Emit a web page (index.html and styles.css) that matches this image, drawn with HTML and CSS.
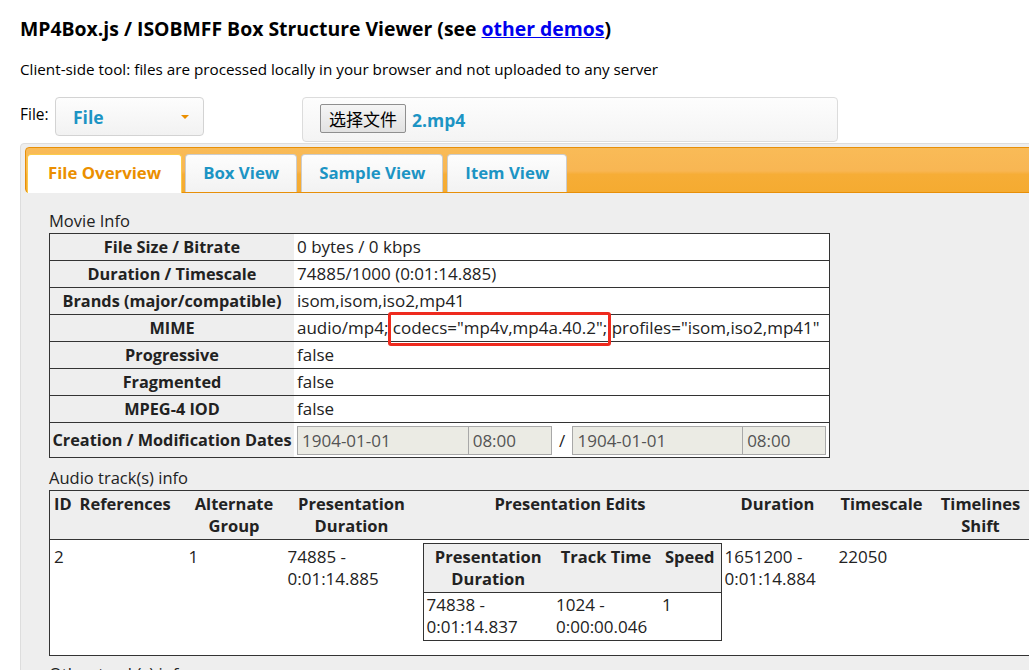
FILE: index.html
```html
<!DOCTYPE html>
<html lang="en">
<head>
<meta charset="utf-8">
<title>MP4Box.js / ISOBMFF Box Structure Viewer</title>
<link rel="stylesheet" href="styles.css">
</head>
<body>
<div class="page">
  <h1 class="title">MP4Box.js / ISOBMFF Box Structure Viewer (see <a href="#">other demos</a>)</h1>
  <p class="subtitle">Client-side tool: files are processed locally in your browser and not uploaded to any server</p>
  <div class="file-row">
    <span class="file-label">File:</span>
    <div class="select"><span class="select-text">File</span><span class="caret"></span></div>
    <div class="upload"><span class="choose">选择文件</span><span class="fname">2.mp4</span></div>
  </div>
  <div class="tabs">
    <ul class="tab-nav">
      <li class="tab active">File Overview</li>
      <li class="tab">Box View</li>
      <li class="tab">Sample View</li>
      <li class="tab">Item View</li>
    </ul>
    <div class="panel">
      <div class="caption">Movie Info</div>
      <table class="info">
        <tr><th>File Size / Bitrate</th><td>0 bytes / 0 kbps</td></tr>
        <tr><th>Duration / Timescale</th><td>74885/1000 (0:01:14.885)</td></tr>
        <tr><th>Brands (major/compatible)</th><td>isom,isom,iso2,mp41</td></tr>
        <tr><th>MIME</th><td>audio/mp4; <span class="hl">codecs="mp4v,mp4a.40.2";</span> profiles="isom,iso2,mp41"</td></tr>
        <tr><th>Progressive</th><td>false</td></tr>
        <tr><th>Fragmented</th><td>false</td></tr>
        <tr><th>MPEG-4 IOD</th><td>false</td></tr>
        <tr class="dates-row"><th>Creation / Modification Dates</th>
          <td><div class="dates"><span class="dt date">1904-01-01</span><span class="dt time">08:00</span><span class="slash">/</span><span class="dt date date2">1904-01-01</span><span class="dt time">08:00</span></div></td></tr>
      </table>
      <div class="caption cap-gap">Audio track(s) info</div>
      <table class="tracks">
        <colgroup>
          <col class="c-id"><col class="c-ref"><col class="c-alt"><col class="c-pd"><col class="c-edit"><col class="c-dur"><col class="c-ts"><col class="c-shift"><col class="c-more">
        </colgroup>
        <thead>
          <tr><th class="left">ID</th><th class="left">References</th><th>Alternate Group</th><th>Presentation Duration</th><th>Presentation Edits</th><th>Duration</th><th>Timescale</th><th>Timelines Shift</th><th></th></tr>
        </thead>
        <tbody>
          <tr>
            <td>2</td>
            <td></td>
            <td>1</td>
            <td>74885 -<br>0:01:14.885</td>
            <td class="edit-cell">
              <table class="edits">
                <colgroup><col class="e1"><col class="e2"><col class="e3"></colgroup>
                <tr><th>Presentation Duration</th><th>Track Time</th><th>Speed</th></tr>
                <tr><td>74838 -<br>0:01:14.837</td><td>1024 -<br>0:00:00.046</td><td>1</td></tr>
              </table>
            </td>
            <td>1651200 -<br>0:01:14.884</td>
            <td>22050</td>
            <td></td>
            <td></td>
          </tr>
        </tbody>
      </table>
      <div class="caption cap-gap2">Other track(s) info</div>
    </div>
  </div>
</div>
</body>
</html>
```

FILE: styles.css
```css
html, body {
  margin: 0;
  padding: 0;
  overflow: hidden;
  background: #fff;
}
body {
  font-family: "Open Sans", "Noto Sans CJK SC", sans-serif;
  color: #222;
}
.page {
  padding: 17px 0 0 20px;
}
.title {
  margin: 0;
  font-size: 19.4px;
  line-height: 24px;
  font-weight: 700;
  color: #000;
  white-space: nowrap;
}
.title a {
  color: #0000ee;
  text-decoration: underline;
}
.subtitle {
  margin: 16px 0 0;
  font-size: 15.25px;
  line-height: 24px;
  color: #000;
  white-space: nowrap;
}
.file-row {
  display: flex;
  align-items: flex-start;
  margin-top: 16px;
}
.file-label {
  font-size: 15.5px;
  line-height: 24px;
  margin-top: 5px;
  width: 35px;
  color: #000;
}
.select {
  width: 149px;
  height: 39px;
  box-sizing: border-box;
  border: 1px solid #d3d3d3;
  border-radius: 4px;
  background: linear-gradient(#fdfdfd, #f2f2f2);
  display: flex;
  align-items: center;
  justify-content: space-between;
  padding: 0 14px 0 17px;
}
.select-text {
  color: #1c94c4;
  font-weight: 700;
  font-size: 17.5px;
}
.caret {
  width: 0;
  height: 0;
  border-left: 4px solid transparent;
  border-right: 4px solid transparent;
  border-top: 4px solid #eb8f00;
}
.upload {
  margin-left: 98px;
  width: 536px;
  height: 45px;
  box-sizing: border-box;
  border: 1px solid #dcdcdc;
  border-radius: 4px;
  background: linear-gradient(#fdfdfd, #f4f4f4);
  display: flex;
  align-items: center;
  padding: 0 0 0 17px;
}
.choose {
  height: 29px;
  width: 86px;
  box-sizing: border-box;
  border: 1px solid #8f8f8f;
  border-radius: 2px;
  background: linear-gradient(#f5f5f5, #e2e2e2);
  font-family: "Noto Sans CJK SC", sans-serif;
  font-size: 17px;
  line-height: 27px;
  text-align: center;
  color: #000;
  margin-top: -2px;
}
.fname {
  margin-left: 6px;
  color: #1c94c4;
  font-weight: 700;
  font-size: 17.5px;
}
.tabs {
  margin-top: 1px;
  width: 1160px;
  height: 560px;
  border: 1px solid #dddddd;
  border-radius: 4px;
  background: #eeeeee;
  padding: 3px 4px;
}
.tab-nav {
  list-style: none;
  margin: 0;
  padding: 6px 2px 0 1px;
  display: flex;
  align-items: flex-start;
  height: 38px;
  border: 1px solid #e78f08;
  border-radius: 4px;
  background: linear-gradient(#f9bb57 0%, #f8b653 52%, #f6ad36 60%, #f5ab31 100%);
}
.tab {
  height: 38px;
  box-sizing: border-box;
  padding: 0 17px;
  margin-right: 4px;
  border: 1px solid #cccccc;
  border-bottom: 0;
  border-radius: 4px 4px 0 0;
  background: linear-gradient(#fdfdfd, #f2f2f2);
  color: #1c94c4;
  font-weight: 700;
  font-size: 16.8px;
  line-height: 36px;
}
.tab.active {
  height: 39px;
  margin-right: 3px;
  padding: 0 20px 0 20px;
  margin-bottom: -1px;
  background: #fff;
  border-color: #fbcb4b;
  color: #eb8f00;
}
.panel {
  padding: 16px 0 0 24px;
}
.caption {
  font-size: 16.5px;
  line-height: 24px;
  color: #222;
}
.cap-gap {
  margin-top: 8px;
}
.cap-gap2 {
  margin-top: 6px;
}
.info {
  border-collapse: collapse;
  table-layout: fixed;
  width: 781px;
  border: 1px solid #333;
  background: #fff;
}
.info th {
  background: #eeeeee;
  font-weight: 700;
  font-size: 16.3px;
  text-align: center;
  width: 242px;
  padding: 2px 1px;
  border-top: 1px solid #333;
  line-height: 22px;
  white-space: nowrap;
}
.info td {
  padding: 2px 3px;
  border-top: 1px solid #333;
  line-height: 22px;
  font-size: 17px;
  white-space: nowrap;
}
.info .dates-row td {
  padding: 3px 3px 2px;
}
.hl {
  position: relative;
}
.hl::after {
  content: "";
  position: absolute;
  left: -5px;
  right: -4px;
  top: -4px;
  bottom: -7px;
  border: 3px solid #ee2a1e;
  border-radius: 3px;
}
.dates {
  display: flex;
  align-items: center;
}
.dt {
  display: inline-block;
  height: 29px;
  box-sizing: border-box;
  border: 1px solid #a8a8a8;
  background: #ebebe4;
  color: #545454;
  line-height: 27px;
  padding-left: 4px;
}
.date {
  width: 172px;
}
.date2 {
  width: 171px;
}
.time {
  width: 84px;
  margin-left: -1px;
}
.slash {
  width: 21px;
  text-align: center;
  color: #222;
}
.tracks {
  border-collapse: collapse;
  table-layout: fixed;
  width: 1133px;
  border: 1px solid #333;
  background: #fff;
}
.c-id { width: 26px; }
.c-ref { width: 109px; }
.c-alt { width: 99px; }
.c-pd { width: 136px; }
.c-edit { width: 301px; }
.c-dur { width: 114px; }
.c-ts { width: 94px; }
.c-shift { width: 104px; }
.c-more { width: 150px; }
.tracks > thead > tr > th {
  background: #eeeeee;
  font-weight: 700;
  font-size: 16.5px;
  line-height: 22px;
  padding: 2px 3px;
  vertical-align: top;
  text-align: center;
  border-bottom: 1px solid #333;
}
.tracks > thead > tr > th.left {
  text-align: left;
  padding-left: 4px;
}
.tracks > tbody > tr > td {
  font-size: 17px;
  line-height: 22px;
  padding: 6px 3px 4px 4px;
  vertical-align: top;
}
.tracks > tbody > tr > td.edit-cell {
  padding: 3px 2px 4px 3px;
}
.edits {
  border-collapse: collapse;
  table-layout: fixed;
  width: 298px;
  border: 1px solid #333;
  margin-bottom: 10px;
}
.e1 { width: 130px; }
.e2 { width: 106px; }
.e3 { width: 62px; }
.edits th {
  background: #eeeeee;
  font-weight: 700;
  font-size: 16.5px;
  line-height: 22px;
  padding: 2px 2px;
  vertical-align: top;
  text-align: center;
  border-bottom: 1px solid #333;
}
.edits td {
  font-size: 17px;
  line-height: 22px;
  padding: 1px 3px 2px;
  vertical-align: top;
  background: #fff;
}
```
